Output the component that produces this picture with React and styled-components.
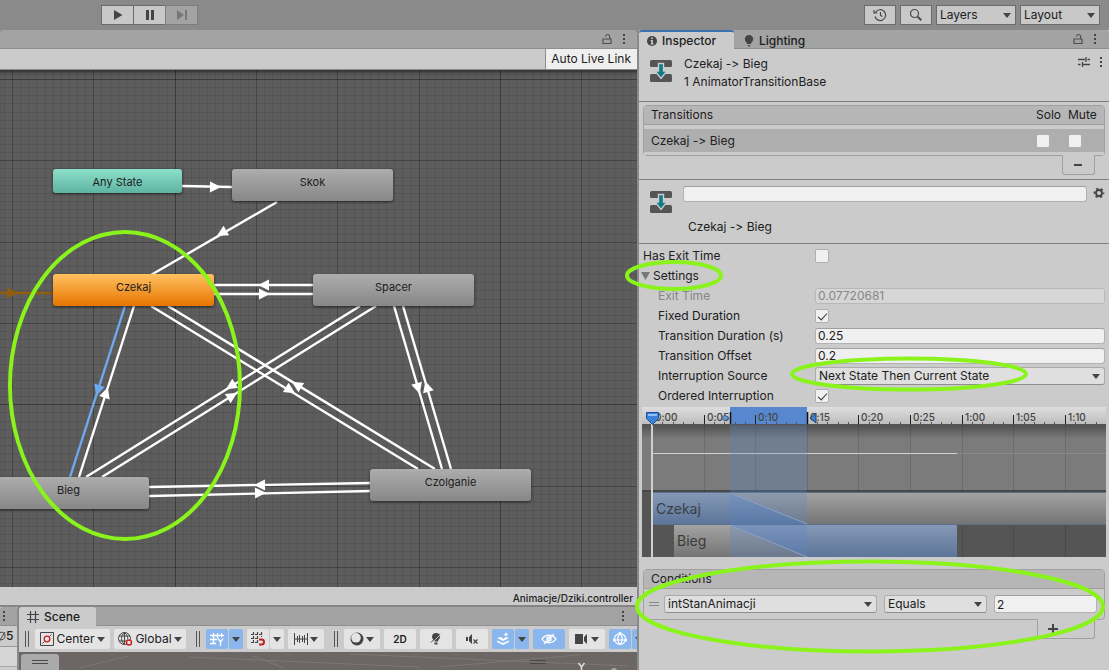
import React, { useState } from "react";
import styled, { createGlobalStyle, css } from "styled-components";

const NODES = [
  { name: "Any State", x: 53, y: 99, w: 129, h: 24, kind: "any" },
  { name: "Skok", x: 232, y: 99, w: 161, h: 32 },
  { name: "Czekaj", x: 53, y: 204, w: 161, h: 32, kind: "entry" },
  { name: "Spacer", x: 313, y: 204, w: 161, h: 32 },
  { name: "Bieg", x: -12, y: 407, w: 161, h: 32 },
  { name: "Czolganie", x: 370, y: 399, w: 161, h: 32 },
];

// from, to and the point where the arrow head sits
const EDGES = [
  { a: [182, 116], b: [232, 117], at: [215, 117] },
  { a: [277, 132], b: [151, 205], at: [222, 163] },
  { a: [313, 215], b: [214, 215], at: [264, 215] },
  { a: [214, 224], b: [313, 224], at: [264, 224] },
  { a: [0, 223], b: [53, 223], at: [12, 223], color: "#8f5d0c" },
  { a: [125, 236], b: [70, 407], at: [98, 320], color: "#6cabee" },
  { a: [79, 407], b: [134, 236], at: [106, 323] },
  { a: [151, 236], b: [418, 399], at: [290, 320] },
  { a: [435, 399], b: [168, 236], at: [297, 315] },
  { a: [360, 236], b: [86, 407], at: [231, 316] },
  { a: [102, 407], b: [376, 236], at: [232, 326] },
  { a: [394, 236], b: [442, 399], at: [418, 318] },
  { a: [451, 399], b: [403, 236], at: [427, 317] },
  { a: [370, 413], b: [149, 417], at: [260, 415] },
  { a: [149, 426], b: [370, 421], at: [260, 423] },
];

const TICKS = ["0:00", "0:05", "0:10", "0:15", "0:20", "0:25", "1:00", "1:05", "1:10"];

const App = () => (
  <Page>
    <GlobalStyle />
    <TopBar />
    <Main>
      <LeftColumn>
        <AnimatorPanel />
        <BottomPanels />
      </LeftColumn>
      <Inspector />
    </Main>
    <Annotations />
  </Page>
);

const TopBar = () => (
  <TopToolbar>
    <Playback>
      <PlayButton aria-label="Play">
        <svg width="12" height="12" viewBox="0 0 12 12">
          <path d="M2 1v10L10.500 6z" fill="#444" />
        </svg>
      </PlayButton>
      <PlayButton aria-label="Pause">
        <svg width="12" height="12" viewBox="0 0 12 12">
          <path d="M2 1h3v10H2zM7 1h3v10H7z" fill="#444" />
        </svg>
      </PlayButton>
      <PlayButton aria-label="Step" disabled>
        <svg width="12" height="12" viewBox="0 0 12 12">
          <path d="M1 1v10l7-5zM9 1h2v10H9z" fill="#777" />
        </svg>
      </PlayButton>
    </Playback>
    <TopActions>
      <SquareButton aria-label="Undo history">
        <svg width="14" height="14" viewBox="0 0 14 14" fill="none" stroke="#484848" strokeWidth="1.200">
          <path d="M2.500 4.500A5.400 5.400 0 1 1 2 8.500M1 2v3h3.200M7.500 4v3.500l2 1" />
        </svg>
      </SquareButton>
      <SquareButton aria-label="Search">
        <svg width="14" height="14" viewBox="0 0 14 14" fill="none" stroke="#484848">
          <circle cx="5.500" cy="5.500" r="4" strokeWidth="1.200" />
          <path d="M8.700 8.700l3.600 3.600" strokeWidth="2" />
        </svg>
      </SquareButton>
      <TopSelect label="Layers" />
      <TopSelect label="Layout" />
    </TopActions>
  </TopToolbar>
);

const TopSelect = ({ label }) => (
  <SelectWrap $top>
    <select aria-label={label}>
      <option>{label}</option>
    </select>
    <Caret />
  </SelectWrap>
);

const Dots = () => (
  <svg width="4" height="12" viewBox="0 0 4 12" fill="#444">
    <path d="M1 1h2v2H1zM1 5h2v2H1zM1 9h2v2H1z" />
  </svg>
);

const Lock = () => (
  <svg width="10" height="12" viewBox="0 0 10 12" fill="none" stroke="#505050" strokeWidth="1.200">
    <path d="M1 6h8v4.500H1zM7.600 6V3.500a2 2 0 0 0-4 0" />
  </svg>
);

const GridLines = () => {
  const vertical = [];
  const horizontal = [];
  for (let i = -1; i < 240; i++) {
    vertical.push({ pos: Math.round(12 + (i * 244) / 30), major: i % 10 === 0, bold: i % 40 === 20 });
    horizontal.push({ pos: Math.round(9 + (i * 244) / 30), major: i % 10 === 0, bold: i % 40 === 0 });
  }
  const opacity = (l) => (l.bold ? 0.36 : l.major ? 0.26 : 0.08);
  return (
    <g fill="#000">
      {vertical.map((l) => (
        <rect key={`v${l.pos}`} x={l.pos} y="0" width="1" height="100%" opacity={opacity(l)} />
      ))}
      {horizontal.map((l) => (
        <rect key={`h${l.pos}`} x="0" y={l.pos} width="100%" height="1" opacity={opacity(l)} />
      ))}
    </g>
  );
};

const Edge = ({ a, b, at, color = "#fff" }) => {
  const angle = (Math.atan2(b[1] - a[1], b[0] - a[0]) * 180) / Math.PI;
  return (
    <g>
      <line x1={a[0]} y1={a[1]} x2={b[0]} y2={b[1]} stroke={color} strokeWidth="2.400" />
      <path d="M-5-5.500L6 0L-5 5.500z" fill={color} transform={`translate(${at[0]} ${at[1]}) rotate(${angle})`} />
    </g>
  );
};

const AnimatorPanel = () => (
  <Animator>
    <TabBar $end>
      <Lock />
      <Dots />
    </TabBar>
    <AnimatorBar>
      <LiveLink>Auto Live Link</LiveLink>
    </AnimatorBar>
    <Graph>
      <svg width="100%" height="100%">
        <GridLines />
        {EDGES.map((edge, index) => (
          <Edge key={index} {...edge} />
        ))}
      </svg>
      {NODES.map((node) => (
        <Node key={node.name} $node={node}>
          {node.name}
        </Node>
      ))}
    </Graph>
    <AnimatorFooter>Animacje/Dziki.controller</AnimatorFooter>
  </Animator>
);

const BottomPanels = () => (
  <Bottom>
    <SidePanel>
      <TabBar>
        <SideDots>
          <Dots />
        </SideDots>
      </TabBar>
      <SideCount>
        <svg width="6" height="12" viewBox="0 0 6 12" fill="none" stroke="#444">
          <path d="M0 2.500c3-1 5 1 5 3.500s-2 4-5 4M0 10l5-8" />
        </svg>
        5
      </SideCount>
      <SideRow />
    </SidePanel>
    <ScenePanel>
      <TabBar>
        <Tab $width={77}>
          <svg width="12" height="12" viewBox="0 0 12 12" stroke="#444" strokeWidth="1.200">
            <path d="M3.500 0v12M8.500 0v12M0 3.500h12M0 8.500h12" />
          </svg>
          Scene
        </Tab>
        <TabEnd>
          <Dots />
        </TabEnd>
      </TabBar>
      <SceneTools />
      <SceneView>
        <svg width="100%" height="18">
          <path d="M60 16L110 4M170 5l230 10M235 4l30 12M330 2l280 12M420 15L560 3" stroke="#7c7775" fill="none" />
          <rect x="2" y="2" width="38" height="20" rx="3" fill="#aaa" />
          <path d="M13 8.500h16M13 11.500h16M511 8.500h16M511 11.500h16" stroke="#4a4a4a" />
          <path d="M559.500 11l3 4l3-4M562.500 15v4" stroke="#ddd" strokeWidth="1.500" fill="none" />
          <circle cx="595" cy="19" r="3" fill="#aaa" />
        </svg>
      </SceneView>
    </ScenePanel>
  </Bottom>
);

const SceneTools = () => (
  <Tools>
    <Handle />
    <Tool $width={75}>
      <svg width="14" height="14" viewBox="0 0 14 14" fill="none">
        <path d="M.500.500h13v13H.500z" stroke="#444" />
        <path d="M2.500 11.500l2-2M9.500 4.500l2-2" stroke="#444" />
        <circle cx="7" cy="7" r="2.800" stroke="#c22" strokeWidth="1.300" />
      </svg>
      Center
      <Caret />
    </Tool>
    <Tool $width={72}>
      <svg width="15" height="14" viewBox="0 0 15 14" fill="none" stroke="#444">
        <circle cx="6.500" cy="6.500" r="6" />
        <path d="M6.500.500v12M1 4h11M1 9h8M6.500.500c-4 3.500-4 8.500 0 12M6.500.500c3 2.500 3.500 5 3 7" />
        <circle cx="11" cy="10.500" r="2.500" stroke="#c22" strokeWidth="1.400" fill="#e4e4e4" />
      </svg>
      Global
      <Caret />
    </Tool>
    <Handle $spaced />
    <ToolGroup>
      <Tool $width={22} $active aria-label="Grid">
        <svg width="14" height="14" viewBox="0 0 14 14" fill="none" stroke="#fff" strokeWidth="1.300">
          <path d="M3.500 1v11M7.500 1v5M11.500 1v4M0 3.500h14M0 7.500h7M0 11.500h6M8 6.500l2.500 3.500L13 6.500M10.500 10v4" />
        </svg>
      </Tool>
      <Tool $width={14} $active aria-label="Grid options">
        <Caret />
      </Tool>
    </ToolGroup>
    <ToolGroup>
      <Tool $width={22} aria-label="Snapping">
        <svg width="14" height="14" viewBox="0 0 14 14" fill="none" stroke="#444" strokeWidth="1.200">
          <path d="M2.500 0v12M6.500 0v12M10.500 0v5M0 2.500h12M0 6.500h7M0 10.500h6" strokeDasharray="3 1" />
          <path d="M8 7.500h2.500a2.300 2.300 0 0 1 0 5H8" stroke="#b22" strokeWidth="2" />
        </svg>
      </Tool>
      <Tool $width={14} aria-label="Snapping options">
        <Caret />
      </Tool>
    </ToolGroup>
    <Tool $width={36} aria-label="Increment snapping">
      <svg width="14" height="12" viewBox="0 0 14 12" stroke="#444">
        <path d="M.500 0v12M13.500 0v12M3.500 3v6M5.500 2v8M8.500 3v6M10.500 2v8M0 6h14" />
      </svg>
      <Caret />
    </Tool>
    <Handle $spaced />
    <Tool $width={36} aria-label="Draw mode">
      <svg width="14" height="14" viewBox="0 0 14 14">
        <circle cx="7" cy="7" r="6.500" fill="#444" />
        <circle cx="6" cy="5.800" r="4.800" fill="#e4e4e4" />
      </svg>
      <Caret />
    </Tool>
    <Tool $width={32} $bold>
      2D
    </Tool>
    <Tool $width={32} aria-label="Scene lighting">
      <svg width="12" height="14" viewBox="0 0 12 14">
        <path d="M6 1a4 4 0 0 0-4 4c0 2 2 2.500 2 4.500h4c0-2 2-2.500 2-4.500a4 4 0 0 0-4-4zM4.500 10.500h3v2h-3z" fill="#444" />
        <path d="M2 11L10.500 2.500" stroke="#e4e4e4" strokeWidth="0.800" />
        <path d="M1 10.500L9.800 1.700" stroke="#444" strokeWidth="1" />
      </svg>
    </Tool>
    <Tool $width={32} aria-label="Scene audio">
      <svg width="12" height="12" viewBox="0 0 12 12">
        <path d="M0 4h2v4H0zM3 4l3-3v10L3 8z" fill="#444" />
        <path d="M7.500 6.500l4 4M11.500 6.500l-4 4" stroke="#444" strokeWidth="1.200" />
      </svg>
    </Tool>
    <ToolGroup>
      <Tool $width={22} $active aria-label="Effects">
        <svg width="14" height="14" viewBox="0 0 14 14" fill="#fff">
          <path d="M1 6l4-1 2 2 3-2 3 1-6 3zM1 8.500l6 2.500 6-2.500V10l-6 3-6-3zM10 0l.700 1.800L12.500 2.500l-1.800.700L10 5l-.700-1.800L7.500 2.500l1.800-.700z" />
        </svg>
      </Tool>
      <Tool $width={14} $active aria-label="Effects options">
        <Caret />
      </Tool>
    </ToolGroup>
    <Tool $width={32} $active aria-label="Scene visibility">
      <svg width="16" height="12" viewBox="0 0 16 12" fill="none" stroke="#fff" strokeWidth="1.300">
        <path d="M1 6c3.500-5 10.500-5 14 0-3.500 5-10.500 5-14 0zM3 11L13 1" />
        <circle cx="8" cy="6" r="2" />
      </svg>
    </Tool>
    <Tool $width={36} aria-label="Camera">
      <svg width="14" height="12" viewBox="0 0 14 12" fill="#444">
        <path d="M0 1h8v10H0zM9 4l3-3v10L9 8z" />
      </svg>
      <Caret />
    </Tool>
    <ToolGroup>
      <Tool $width={22} $active aria-label="Gizmos">
        <svg width="14" height="14" viewBox="0 0 14 14" fill="none" stroke="#fff" strokeWidth="1.200">
          <circle cx="7" cy="7" r="5.500" />
          <path d="M7 1.500c-3 3-3 8 0 11M7 1.500c3 3 3 8 0 11M1 8h12" />
          <path d="M5.800 0h2.400v2.400H5.800zM0 6.800h2.400v2.400H0zM11.600 6.800H14v2.400h-2.400z" fill="#fff" stroke="none" />
        </svg>
      </Tool>
      <Tool $width={14} $active aria-label="Gizmo options">
        <Caret />
      </Tool>
    </ToolGroup>
  </Tools>
);

const TransitionIcon = () => (
  <svg width="22" height="24" viewBox="0 0 22 24">
    <rect x="0" y="1" width="22" height="7" rx="1.500" fill="#555" />
    <rect x="0" y="15" width="22" height="8" rx="1.500" fill="#555" />
    <path d="M8.500 4.500h5V12h3.500L11 19.500 5 12h3.500z" fill="#107b87" stroke="#cbcbcb" strokeWidth="1.400" />
  </svg>
);

const Inspector = () => (
  <InspectorPanel>
    <TabBar>
      <Tab $width={95} $selected>
        <svg width="10" height="10" viewBox="0 0 10 10">
          <circle cx="5" cy="5" r="5" fill="#444" />
          <path d="M4.200 1.500h1.700V3H4.200zM3.500 4h2.400v3.500h.800v1H3.500v-1h.800V5h-.800z" fill="#cbcbcb" />
        </svg>
        Inspector
      </Tab>
      <Tab $width={84} $idle>
        <svg width="10" height="12" viewBox="0 0 10 12" fill="#444">
          <path d="M5 0a4.200 4.200 0 0 0-4.200 4.200C.800 6.500 3 7 3 9h4c0-2 2.200-2.500 2.200-4.800A4.200 4.200 0 0 0 5 0zM3.500 10h3L5 12z" />
        </svg>
        Lighting
      </Tab>
      <TabEnd>
        <Lock />
        <Dots />
      </TabEnd>
    </TabBar>
    <Header>
      <TransitionIcon />
      <HeaderText>
        <p>Czekaj -&gt; Bieg</p>
        <p>1 AnimatorTransitionBase</p>
      </HeaderText>
      <HeaderActions>
        <svg width="12" height="12" viewBox="0 0 12 12" stroke="#444" strokeWidth="1.300">
          <path d="M0 3.500h7M9.500 3.500H12M8 1v5M0 8.500h2.500M5 8.500h7M4.500 6v5" />
        </svg>
        <Dots />
      </HeaderActions>
    </Header>
    <TransitionList>
      <TransitionTable>
        <thead>
          <tr>
            <th>Transitions</th>
            <th>Solo</th>
            <th>Mute</th>
          </tr>
        </thead>
        <tbody>
          <tr>
            <td>Czekaj -&gt; Bieg</td>
            <td>
              <Checkbox type="checkbox" aria-label="Solo" />
            </td>
            <td>
              <Checkbox type="checkbox" aria-label="Mute" />
            </td>
          </tr>
        </tbody>
      </TransitionTable>
      <ListFoot>
        <ListButton aria-label="Remove transition" $width={33}>
          <svg width="10" height="10" viewBox="0 0 10 10">
            <path d="M1 4h8v2H1z" fill="#444" />
          </svg>
        </ListButton>
      </ListFoot>
    </TransitionList>
    <Naming>
      <TransitionIcon />
      <NameColumn>
        <Field aria-label="Transition name" defaultValue="" />
        <p>Czekaj -&gt; Bieg</p>
      </NameColumn>
      <IconButton aria-label="Settings">
        <svg width="12" height="12" viewBox="0 0 12 12" fill="none" stroke="#444">
          <circle cx="6" cy="6" r="3" strokeWidth="1.800" />
          <circle cx="6" cy="6" r="4.600" strokeWidth="1.500" strokeDasharray="2.400 2.417" strokeDashoffset="1.200" />
        </svg>
      </IconButton>
    </Naming>
    <Properties />
    <Timeline />
    <Conditions />
  </InspectorPanel>
);

const Properties = () => {
  const [open, setOpen] = useState(true);

  return (
    <PropertyList>
      <Row>
        <label htmlFor="exit">Has Exit Time</label>
        <Checkbox id="exit" type="checkbox" />
      </Row>
      <Row>
        <Foldout aria-expanded={open} onClick={() => setOpen(!open)}>
          <svg width="9" height="8" viewBox="0 0 9 8">
            <path d="M0 0h9L4.500 8z" fill="#777" />
          </svg>
          Settings
        </Foldout>
      </Row>
      {open && (
        <>
          <Row $indent $muted>
            <label htmlFor="exitTime">Exit Time</label>
            <Field id="exitTime" defaultValue="0.07720681" disabled />
          </Row>
          <Row $indent>
            <label htmlFor="fixed">Fixed Duration</label>
            <Checkbox id="fixed" type="checkbox" defaultChecked />
          </Row>
          <Row $indent>
            <label htmlFor="duration">Transition Duration (s)</label>
            <Field id="duration" defaultValue="0.25" />
          </Row>
          <Row $indent>
            <label htmlFor="offset">Transition Offset</label>
            <Field id="offset" defaultValue="0.2" />
          </Row>
          <Row $indent>
            <label htmlFor="source">Interruption Source</label>
            <SelectWrap>
              <select id="source">
                <option>Next State Then Current State</option>
              </select>
              <Caret />
            </SelectWrap>
          </Row>
          <Row $indent>
            <label htmlFor="ordered">Ordered Interruption</label>
            <Checkbox id="ordered" type="checkbox" defaultChecked />
          </Row>
        </>
      )}
    </PropertyList>
  );
};

const Timeline = () => {
  const step = 51.6;
  const minor = Array.from({ length: 90 }, (_, i) => Math.round(10 + (i * step) / 5));

  return (
    <TimelineBox>
      <svg width="100%" height="150">
        <defs>
          <linearGradient id="ruler" x2="0" y2="1">
            <stop offset="0" stopColor="#dedede" />
            <stop offset="1" stopColor="#bdbdbd" />
          </linearGradient>
          <linearGradient id="shade" x2="0" y2="1">
            <stop offset="0" stopColor="#4e4e4e" />
            <stop offset="1" stopColor="#7b7b7b" />
          </linearGradient>
          <linearGradient id="clip" x2="0" y2="1">
            <stop offset="0" stopColor="#a3a3a3" />
            <stop offset="1" stopColor="#747474" />
          </linearGradient>
          <linearGradient id="blueTop" gradientUnits="userSpaceOnUse" x1="0" x2="0" y1="85" y2="117">
            <stop offset="0" stopColor="#8699b6" />
            <stop offset="1" stopColor="#5c7599" />
          </linearGradient>
          <linearGradient id="blueBottom" gradientUnits="userSpaceOnUse" x1="0" x2="0" y1="118" y2="150">
            <stop offset="0" stopColor="#8699b6" />
            <stop offset="1" stopColor="#5c7599" />
          </linearGradient>
        </defs>
        <rect width="100%" height="17" fill="url(#ruler)" />
        <rect y="17" width="100%" height="133" fill="#555" />
        <rect y="17" width="100%" height="67" fill="#7b7b7b" />
        <rect y="17" width="100%" height="15" fill="url(#shade)" />
        <rect y="83" width="100%" height="2" fill="#484848" />
        {TICKS.map((tick, i) => (
          <rect key={tick} x={Math.round(10 + i * step)} y="17" width="1" height="133" fill="#000" opacity="0.12" />
        ))}
        <rect x="10" y="46" width="100%" height="1" fill="#8a8a8a" />
        <rect x="10" y="46" width="305" height="1" fill="#d0d0d0" />
        <rect x="11" y="86" width="100%" height="31" fill="url(#clip)" />
        <path d="M11 86H88L165 117H11z" fill="url(#blueTop)" />
        <rect x="32" y="118" width="283" height="32" fill="url(#clip)" />
        <path d="M88 118H315V150H165z" fill="url(#blueBottom)" />
        <path d="M11 85.500H900M11 117.500H900" stroke="#5b6e8c" />
        <rect x="88" y="17" width="77" height="133" fill="#5b86c8" opacity="0.280" />
        <path d="M88 86l77 31M88 118l77 32" stroke="#8aa1c6" fill="none" />
        <rect x="88" width="77" height="18" fill="#5788cf" />
        {minor.map((x) => (
          <rect key={x} x={x} y="15" width="1" height="2" fill="#555" />
        ))}
        {TICKS.map((tick, i) => (
          <g key={tick}>
            <rect x={Math.round(10 + i * step)} y="8" width="1" height="9" fill="#222" />
            <text x={Math.round(13 + i * step)} y="14" fontSize="10" fontWeight="500" fill="#444">
              {tick}
            </text>
          </g>
        ))}
        <path d="M0 17.500H900" stroke="#555" />
        <path d="M88.500 5v12M165.500 5v12" stroke="#111" strokeWidth="1.500" />
        <path d="M79 11l4-3 4 3-4 3z" fill="#6f93c4" stroke="#3c5c8c" />
        <path d="M174 6v10l-6-5z" fill="#3f7fd8" stroke="#245" />
        <rect x="9" y="17" width="2" height="133" fill="#d0d0d0" />
        <path d="M4.500 5.500h12v6l-6 6-6-6z" fill="#3b82dd" stroke="#1d4f96" />
        <path d="M6 7h9v2H6z" fill="#8fc0f7" />
        <text x="14" y="107" fontSize="14" fill="#3a3f47">
          Czekaj
        </text>
        <text x="35" y="139" fontSize="14" fill="#3a3a3a">
          Bieg
        </text>
      </svg>
    </TimelineBox>
  );
};

const Conditions = () => (
  <ConditionsList>
    <ConditionBox>
      <ConditionTitle>Conditions</ConditionTitle>
      <ConditionRow>
        <svg width="10" height="6" viewBox="0 0 10 6" stroke="#888">
          <path d="M0 1.500h10M0 4.500h10" />
        </svg>
        <SelectWrap>
          <select aria-label="Parameter">
            <option>intStanAnimacji</option>
          </select>
          <Caret />
        </SelectWrap>
        <SelectWrap>
          <select aria-label="Comparison">
            <option>Equals</option>
          </select>
          <Caret />
        </SelectWrap>
        <ConditionValue aria-label="Value" defaultValue="2" />
      </ConditionRow>
    </ConditionBox>
    <ListFoot>
      <ListButton aria-label="Add condition" $width={58}>
        <svg width="10" height="10" viewBox="0 0 10 10">
          <path d="M0 4h4V0h2v4h4v2H6v4H4V6H0z" fill="#444" />
        </svg>
      </ListButton>
    </ListFoot>
  </ConditionsList>
);

const Annotations = () => (
  <Marks width="1109" height="670" fill="none" stroke="#8af31c" strokeWidth="4">
    <ellipse cx="125" cy="385.500" rx="115" ry="153.500" />
    <ellipse cx="674" cy="275.500" rx="47" ry="13.500" />
    <ellipse cx="909" cy="374" rx="117" ry="15.500" />
    <ellipse cx="870" cy="606.500" rx="233" ry="45" />
  </Marks>
);

const GlobalStyle = createGlobalStyle`
  * {
    box-sizing: border-box;
  }
  body {
    margin: 0;
    background: #8a8a8a;
  }
  body, button, input, select, table {
    font-family: Inter, Roboto, "Liberation Sans", sans-serif;
    font-size: 12px;
    font-variant-ligatures: none;
    line-height: 16px;
    color: #202020;
  }
  p {
    margin: 0;
  }
  svg {
    flex: none;
    display: block;
  }
  button {
    border: 0;
    padding: 0;
    background: none;
  }
`;

const Page = styled.div`
  position: relative;
  display: flex;
  flex-direction: column;
  min-height: 100vh;
  overflow: hidden;
`;

const TopToolbar = styled.header`
  display: flex;
  align-items: center;
  justify-content: space-between;
  height: 30px;
  padding: 0 9px 0 101px;
  background: #8a8a8a;
`;

const Playback = styled.div`
  display: flex;
`;

const PlayButton = styled.button`
  display: flex;
  align-items: center;
  justify-content: center;
  width: 33px;
  height: 20px;
  margin-right: -1px;
  border: 1px solid #6b6b6b;
  background: #c8c8c8;

  &:disabled {
    border-color: #7e7e7e;
    background: #a3a3a3;
  }
`;

const TopActions = styled.div`
  display: flex;
  gap: 4px;
`;

const SquareButton = styled.button`
  display: flex;
  align-items: center;
  justify-content: center;
  width: 32px;
  height: 20px;
  border: 1px solid #6b6b6b;
  background: #c8c8c8;
`;

const Caret = styled.span`
  flex: none;
  border: 4px solid transparent;
  border-top: 5px solid #444;
  border-bottom: 0;
`;

const SelectWrap = styled.div`
  position: relative;
  min-width: 0;

  select {
    display: block;
    width: 100%;
    height: 18px;
    padding: 0 20px 0 3px;
    border: 1px solid #ababab;
    border-bottom-color: #8f8f8f;
    border-radius: 3px;
    background: #dfdfdf;
    appearance: none;
  }

  ${Caret} {
    position: absolute;
    right: 5px;
    top: 50%;
    margin-top: -2px;
    pointer-events: none;
  }

  ${({ $top }) =>
    $top &&
    css`
      width: 80px;

      select {
        height: 20px;
        border: 1px solid #6b6b6b;
        border-radius: 0;
        background: #c8c8c8;
      }
    `}
`;

const Main = styled.main`
  flex: 1;
  display: grid;
  grid-template-columns: minmax(0, 637fr) minmax(0, 470fr);
  gap: 2px;
`;

const LeftColumn = styled.div`
  display: flex;
  flex-direction: column;
`;

const Animator = styled.section`
  flex: 1;
  display: flex;
  flex-direction: column;
`;

const TabBar = styled.div`
  display: flex;
  align-items: center;
  gap: 10px;
  height: 19px;
  padding-right: ${({ $end }) => ($end ? "11px" : "0")};
  justify-content: ${({ $end }) => ($end ? "flex-end" : "flex-start")};
  border-bottom: 1px solid #8e8e8e;
  border-radius: 3px 3px 0 0;
  background: #a3a3a3;
`;

const Tab = styled.button`
  display: flex;
  align-items: center;
  gap: 5px;
  width: ${({ $width }) => $width}px;
  height: 19px;
  margin-bottom: -1px;
  padding-left: 8px;
  border-top: ${({ $selected }) => ($selected ? "2px solid #3a72b0" : "0")};
  border-radius: 3px 3px 0 0;
  background: ${({ $idle }) => ($idle ? "transparent" : "#cbcbcb")};
  font-weight: 500;

  ${({ $idle }) =>
    $idle &&
    css`
      padding-left: 0;
      padding-top: 2px;
    `}
`;

const TabEnd = styled.div`
  display: flex;
  gap: 10px;
  margin-left: auto;
  padding-right: 12px;
`;

const AnimatorBar = styled.div`
  display: flex;
  justify-content: flex-end;
  height: 21px;
  border-bottom: 1px solid #888;
  background: #cbcbcb;
`;

const LiveLink = styled.button`
  padding: 0 6px 0 5px;
  border-left: 1px solid #8e8e8e;
  background: #efefef;
`;

const Graph = styled.div`
  position: relative;
  flex: 1;
  min-height: 480px;
  overflow: hidden;
  background: #5d5d5d;
  box-shadow: inset 0 5px 5px -3px rgba(0, 0, 0, 0.5);

  > svg {
    position: absolute;
    inset: 0;
  }
`;

const nodeColors = {
  any: "#8ce0cb, #5fb3a2",
  entry: "#ffc160, #e87400",
  plain: "#adadad, #878787",
};

const Node = styled.div`
  position: absolute;
  left: ${({ $node }) => $node.x}px;
  top: ${({ $node }) => $node.y}px;
  width: ${({ $node }) => $node.w}px;
  height: ${({ $node }) => $node.h}px;
  padding-top: 5px;
  border-radius: 3px;
  background: linear-gradient(${({ $node }) => nodeColors[$node.kind || "plain"]});
  box-shadow: 0 1px 3px rgba(0, 0, 0, 0.6);
  font-size: 11px;
  text-align: center;
`;

const AnimatorFooter = styled.div`
  height: 18px;
  padding: 3px 4px 0;
  background: #cbcbcb;
  font-size: 10px;
  font-weight: 500;
  text-align: right;
`;

const Bottom = styled.div`
  display: grid;
  grid-template-columns: 17px minmax(0, 1fr);
  gap: 2px;
  border-top: 2px solid #858585;
  background: #8a8a8a;
`;

const SidePanel = styled.div`
  display: flex;
  flex-direction: column;
  overflow: hidden;
  background: #cbcbcb;
`;

const SideDots = styled.span`
  padding-left: 2px;
`;

const SideCount = styled.div`
  display: flex;
  align-items: center;
  height: 21px;
  border-bottom: 1px solid #999;
  font-weight: 500;
`;

const SideRow = styled.div`
  flex: 1;
  margin-bottom: 3px;
  border-bottom: 1px solid #aaa;
  background: #d6d6d6;
`;

const ScenePanel = styled.section`
  overflow: hidden;
`;

const Tools = styled.div`
  display: flex;
  align-items: center;
  gap: 4px;
  height: 26px;
  padding-left: 6px;
  background: #cbcbcb;
`;

const Handle = styled.span`
  flex: none;
  width: 4px;
  height: 16px;
  margin: ${({ $spaced }) => ($spaced ? "0 2px 0 6px" : "0 2px 0 0")};
  border: solid #555;
  border-width: 0 1px;
`;

const ToolGroup = styled.div`
  display: flex;
  flex: none;
  gap: 1px;
`;

const Tool = styled.button`
  flex: none;
  display: flex;
  align-items: center;
  justify-content: center;
  gap: 2px;
  width: ${({ $width }) => $width}px;
  height: 20px;
  border-radius: 2px;
  background: ${({ $active }) => ($active ? "#8ab6ee" : "#e4e4e4")};
  font-size: ${({ $bold }) => ($bold ? "10px" : "12px")};
  font-weight: ${({ $bold }) => ($bold ? 600 : 400)};
`;

const SceneView = styled.div`
  height: 18px;
  overflow: hidden;
  background: #6c6665;
`;

const InspectorPanel = styled.aside`
  background: #cbcbcb;
`;

const Header = styled.div`
  display: flex;
  align-items: flex-start;
  gap: 12px;
  height: 53px;
  padding: 10px 6px 0 11px;
  border-bottom: 1px solid #7f7f7f;
`;

const HeaderText = styled.div`
  flex: 1;
  margin-top: -4px;
  line-height: 18px;
`;

const HeaderActions = styled.div`
  display: flex;
  gap: 9px;
  margin-top: -3px;
`;

const TransitionList = styled.div`
  height: 78px;
  padding: 3px 4px 0;
  border-bottom: 1px solid #7f7f7f;
`;

const TransitionTable = styled.table`
  width: 100%;
  border: 1px solid #a0a0a0;
  border-radius: 4px;
  border-spacing: 0;
  table-layout: fixed;

  th, td {
    padding: 0;
    font-weight: 400;
    text-align: left;
  }
  th {
    height: 19px;
    border-bottom: 1px solid #a0a0a0;
    background: #b6b6b6;
  }
  td {
    height: 30px;
    border-top: 4px solid #cbcbcb;
    border-bottom: 3px solid #cbcbcb;
    background: #aeaeae;
  }
  th:first-child, td:first-child {
    padding-left: 7px;
  }
  th:nth-child(2) {
    width: 32px;
  }
  th:nth-child(3) {
    width: 36px;
  }
`;

const ListFoot = styled.div`
  display: flex;
  justify-content: flex-end;
  padding-right: 10px;
`;

const ListButton = styled.button`
  display: flex;
  align-items: center;
  justify-content: center;
  width: ${({ $width }) => $width}px;
  height: 20px;
  margin-top: -1px;
  padding-right: ${({ $width }) => ($width > 40 ? "26px" : "2px")};
  border: 1px solid #a0a0a0;
  border-top-color: #cbcbcb;
  border-radius: 0 0 3px 3px;
`;

const Naming = styled.div`
  display: flex;
  align-items: flex-start;
  gap: 11px;
  height: 64px;
  padding: 6px 4px 0 11px;
  border-bottom: 1px solid #7f7f7f;

  > svg {
    margin-top: 4px;
  }
`;

const NameColumn = styled.div`
  flex: 1;

  p {
    padding: 17px 0 0 5px;
  }
`;

const IconButton = styled.button`
  margin: 1px 0 0 -5px;
`;

const Field = styled.input`
  display: block;
  width: 100%;
  height: 16px;
  padding: 0 2px;
  border: 1px solid #b2b2b2;
  border-top-color: #a0a0a0;
  border-radius: 3px;
  background: #f0f0f0;
  outline: none;

  &:disabled {
    border-color: #b8b8b8;
    background: #d6d6d6;
    color: #868686;
  }
`;

const Checkbox = styled.input`
  display: block;
  position: relative;
  width: 14px;
  height: 14px;
  margin: 0;
  border: 1px solid #b0b0b0;
  border-radius: 2px;
  background: #f0f0f0;
  appearance: none;

  &:checked::after {
    content: "";
    position: absolute;
    left: 4px;
    top: 1px;
    width: 4px;
    height: 8px;
    border: solid #333;
    border-width: 0 1px 1px 0;
    transform: rotate(42deg);
  }
`;

const PropertyList = styled.div`
  padding: 2px 4px 1px;
`;

const Row = styled.div`
  display: grid;
  grid-template-columns: 172px minmax(0, 1fr);
  align-items: center;
  height: 20px;
  color: ${({ $muted }) => ($muted ? "#868686" : "inherit")};

  label {
    padding-left: ${({ $indent }) => ($indent ? "15px" : "0")};
  }
`;

const Foldout = styled.button`
  display: flex;
  align-items: center;
  gap: 3px;
  margin-left: -2px;
`;

const TimelineBox = styled.div`
  margin: 0 3px;
`;

const ConditionsList = styled.div`
  padding: 12px 4px 0;
`;

const ConditionBox = styled.div`
  border: 1px solid #a0a0a0;
  border-radius: 4px;
`;

const ConditionTitle = styled.div`
  height: 19px;
  padding: 1px 7px;
  border-bottom: 1px solid #a0a0a0;
  background: #b6b6b6;
`;

const ConditionRow = styled.div`
  display: grid;
  grid-template-columns: 8px 213fr 103fr 103fr;
  align-items: center;
  gap: 7px;
  height: 30px;
  padding: 0 7px 0 5px;
`;

const ConditionValue = styled(Field)`
  height: 18px;
`;

const Marks = styled.svg`
  position: absolute;
  top: 0;
  left: 0;
  pointer-events: none;
`;

export default App;
